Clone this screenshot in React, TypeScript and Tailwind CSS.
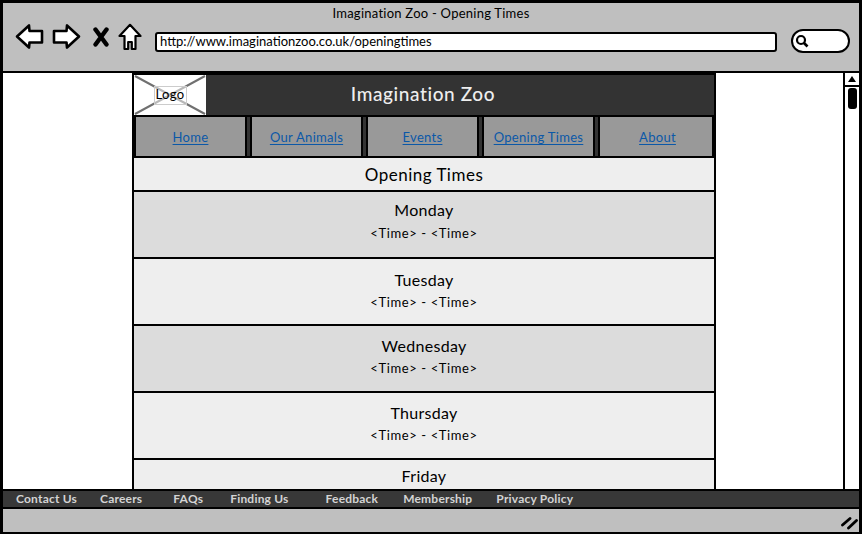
const days = [
  { name: "Monday", box: "h-[67px] bg-[#dcdcdc] pt-[8px]", gap: "mt-[4px]" },
  { name: "Tuesday", box: "h-[67px] bg-[#eeeeee] pt-[11px]", gap: "mt-[3px]" },
  { name: "Wednesday", box: "h-[67px] bg-[#dcdcdc] pt-[10px]", gap: "mt-[3px]" },
  { name: "Thursday", box: "h-[67px] bg-[#eeeeee] pt-[10px]", gap: "mt-[3px]" },
];

const navItems = ["Home", "Our Animals", "Events", "Opening Times", "About"];

const footerLinks = [
  { label: "Contact Us", left: "ml-[13px]" },
  { label: "Careers", left: "ml-[23px]" },
  { label: "FAQs", left: "ml-[31px]" },
  { label: "Finding Us", left: "ml-[27px]" },
  { label: "Feedback", left: "ml-[37px]" },
  { label: "Membership", left: "ml-[25px]" },
  { label: "Privacy Policy", left: "ml-[24px]" },
];

function ArrowIcon({ flip }: { flip?: boolean }) {
  return (
    <svg width="29" height="27" viewBox="0 0 29 27" className={flip ? "-scale-x-100" : ""}>
      <path
        d="M2 13.5 L14 2.5 L14.5 8 L27 8 L27 19.5 L14.5 19.5 L14 24.5 Z"
        fill="#fff"
        stroke="#000"
        strokeWidth="2.6"
        strokeLinejoin="round"
      />
    </svg>
  );
}

function CloseIcon() {
  return (
    <svg width="16" height="20" viewBox="0 0 16 20">
      <path d="M2.5 2.5 L13.5 17.5 M13.5 2.5 L2.5 17.5" stroke="#000" strokeWidth="4.4" strokeLinecap="round" />
    </svg>
  );
}

function HomeIcon() {
  return (
    <svg width="24" height="28" viewBox="0 0 24 28">
      <path
        d="M12 1.8 L22.5 13 L17.5 13 L17.5 26 L13.8 26 L13.8 19 L10.2 19 L10.2 26 L6.5 26 L6.5 13 L1.5 13 Z"
        fill="#fff"
        stroke="#000"
        strokeWidth="2.2"
        strokeLinejoin="round"
      />
    </svg>
  );
}

function SearchIcon() {
  return (
    <svg width="14" height="14" viewBox="0 0 14 14">
      <circle cx="6" cy="6" r="4" fill="#fff" stroke="#000" strokeWidth="2.2" />
      <path d="M9 9 L12.5 12.5" stroke="#000" strokeWidth="2.6" />
    </svg>
  );
}

function ResizeIcon() {
  return (
    <svg width="17" height="14" viewBox="0 0 17 14">
      <path d="M1.5 9 L9 2.5 M7.5 12 L15.5 4.5" stroke="#000" strokeWidth="2.8" strokeLinecap="round" />
    </svg>
  );
}

export default function App() {
  return (
    <div className="h-[535px] w-[863px] overflow-hidden bg-white font-['Lato',sans-serif] text-black">
      <div className="flex h-[534px] w-[862px] flex-col border-[3px] border-b-2 border-black">
        {/* browser chrome */}
        <div className="h-[70px] shrink-0 border-b-2 border-black bg-[#bfbfbf]">
          <p className="pt-[2px] text-center text-[13px] leading-[17px] tracking-[0.25px]">
            Imagination Zoo - Opening Times
          </p>
          <div className="mt-[1px] flex items-start pl-[12px]">
            <ArrowIcon />
            <div className="ml-[8px]">
              <ArrowIcon flip />
            </div>
            <div className="mt-[4px] ml-[12px]">
              <CloseIcon />
            </div>
            <div className="ml-[9px]">
              <HomeIcon />
            </div>
            <div className="mt-[9px] ml-[13px] flex h-[20px] w-[622px] items-center rounded-[3px] border-2 border-black bg-white pb-[1px] pl-[3px] text-[13px]">
              http://www.imaginationzoo.co.uk/openingtimes
            </div>
            <div className="mt-[6px] ml-[14px] flex h-[24px] w-[59px] items-center rounded-full border-2 border-black bg-white pl-[2px]">
              <SearchIcon />
            </div>
          </div>
        </div>

        {/* page */}
        <div className="flex min-h-0 flex-1">
          <div className="min-w-0 flex-1 overflow-hidden pl-[129px]">
            <div className="w-[584px] border-x-2 border-black">
              <div className="flex h-[44px] border-y-2 border-black bg-[#333333]">
                <div className="relative flex w-[72px] shrink-0 items-center justify-center bg-white">
                  <svg className="absolute inset-0 h-full w-full" viewBox="0 0 72 40" preserveAspectRatio="none">
                    <path d="M1 1 L71 39 M71 1 L1 39" stroke="#707070" strokeWidth="2" />
                  </svg>
                  <span className="relative flex h-[19px] w-[33px] items-center justify-center border border-[#cccccc] bg-white/50 text-[13px] tracking-[0.4px]">
                    Logo
                  </span>
                </div>
                <div className="flex-1 pr-[74px] text-center text-[19px] leading-[38px] font-medium tracking-[0.6px] text-[#eeeeee]">
                  Imagination Zoo
                </div>
              </div>
              <div className="flex h-[41px] gap-[3px] border-b-2 border-black bg-[#333333]">
                {navItems.map((item) => (
                  <a
                    key={item}
                    href="#"
                    className="flex flex-1 items-center justify-center border-x-2 border-black bg-[#999999] pt-[3px] text-[13px] tracking-[0.3px] text-[#0b58a8] underline underline-offset-2 last:pl-[3px]"
                  >
                    {item}
                  </a>
                ))}
              </div>
              <div className="h-[34px] border-b-2 border-b-black bg-[#eeeeee] text-center text-[17px] leading-[33px] tracking-[0.5px]">
                Opening Times
              </div>
              {days.map((day) => (
                <div key={day.name} className={`border-b-2 border-black text-center ${day.box}`}>
                  <p className="text-[16px] leading-[20px] tracking-[0.3px]">{day.name}</p>
                  <p className={`text-[13px] leading-[18px] tracking-[0.6px] ${day.gap}`}>{"<Time> - <Time>"}</p>
                </div>
              ))}
              <div className="h-[40px] bg-[#eeeeee] pt-[6px] text-center text-[16px] leading-[20px] tracking-[0.3px]">Friday</div>
            </div>
          </div>

          {/* scrollbar */}
          <div className="w-[16px] shrink-0 border-l-2 border-black bg-white">
            <div className="flex h-[14px] items-center justify-center border-b-2 border-black">
              <div className="h-0 w-0 border-x-[4px] border-b-[6px] border-x-transparent border-b-black" />
            </div>
            <div className="mx-auto mt-[1px] h-[21px] w-[9px] rounded-[3px] bg-black" />
          </div>
        </div>

        {/* footer links */}
        <div className="flex h-[20px] shrink-0 items-center border-y-2 border-black bg-[#383838] text-[12px] font-bold tracking-[0.2px] text-[#d4d4d4]">
          {footerLinks.map((link) => (
            <span key={link.label} className={link.left}>
              {link.label}
            </span>
          ))}
        </div>

        {/* status bar */}
        <div className="flex h-[23px] shrink-0 items-end justify-end bg-[#bfbfbf] pr-[1px] pb-[2px]">
          <ResizeIcon />
        </div>
      </div>
    </div>
  );
}
